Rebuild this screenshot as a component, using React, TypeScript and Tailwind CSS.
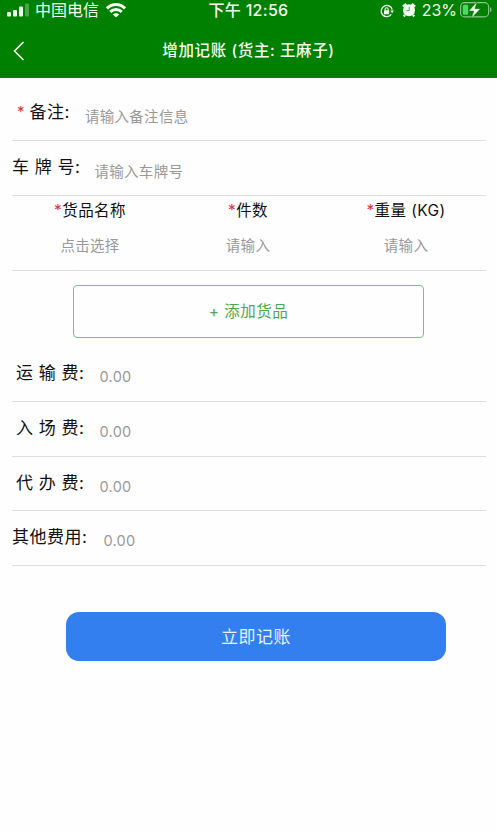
import clsx from "clsx";

const fees = [
  { label: "运 输 费:", pad: "pl-1", gap: "ml-[15px]" },
  { label: "入 场 费:", pad: "pl-1", gap: "ml-[15px]" },
  { label: "代 办 费:", pad: "pl-1", gap: "ml-[15px]" },
  { label: "其他费用:", pad: "", gap: "ml-[16px]" },
];

const columns = [
  { title: "货品名称", hint: "点击选择" },
  { title: "件数", hint: "请输入" },
  { title: "重量 (KG)", hint: "请输入" },
];

function StatusBar() {
  return (
    <div className="grid h-[21px] grid-cols-[1fr_auto_1fr] items-center text-[16px] leading-[21px]">
      <div className="flex items-center pl-[7px]">
        <svg className="-mt-px" width="22" height="14" viewBox="0 0 22 14" fill="#f2fff0">
          <rect x="0" y="9" width="4" height="4.5" rx="1" />
          <rect x="6" y="7" width="4" height="6.5" rx="1" />
          <rect x="12" y="3.5" width="4" height="10" rx="1" />
          <rect x="18" y="0.5" width="4" height="13" rx="1" opacity="0.3" />
        </svg>
        <span className="ml-[6px]">中国电信</span>
        <svg className="ml-[7px] -mt-px" width="20" height="15" viewBox="0 0 20 15" fill="none" stroke="#f2fff0" strokeWidth="2.9">
          <path d="M1 5.4C6 .2 14 .2 19 5.4" />
          <path d="M4.2 8.9c3.3-3.2 8.3-3.2 11.6 0" />
          <path d="M10 14.6 6.8 11.5c1.8-1.6 4.6-1.6 6.4 0z" fill="#f2fff0" stroke="none" />
        </svg>
      </div>
      <span className="text-[16px] font-medium tracking-[0.3px]">下午 12:56</span>
      <div className="flex items-center justify-end pr-[5px]">
        <svg width="14" height="14" viewBox="0 0 14 14" fill="none" stroke="#f2fff0" strokeWidth="1.3">
          <path d="M11.3 10.4A5.6 5.6 0 1 1 12.2 5.6" />
          <path d="M10.2 6.4H14l-1.9 2.8z" fill="#f2fff0" stroke="none" />
          <rect x="4" y="6.2" width="5.2" height="4" rx="0.5" fill="#f2fff0" stroke="none" />
          <path d="M5.1 6.5V5.2a1.5 1.5 0 0 1 3 0v1.3" strokeWidth="1.1" />
        </svg>
        <svg className="-mt-[2px] ml-[8px]" width="14" height="14" viewBox="0 0 14 14" fill="#f2fff0">
          <circle cx="7" cy="7.2" r="6" />
          <path d="M.9 3.7 4.2.9M13.1 3.7 9.8.9M3 12l-1.2 1.5M11 12l1.2 1.5" stroke="#f2fff0" strokeWidth="2.4" />
          <path d="M7.2 3.8v3.8H4.5" fill="none" stroke="#4da64a" strokeWidth="1" />
        </svg>
        <span className="ml-[6px]">23%</span>
        <svg className="ml-[3px] -mt-[2px]" width="32" height="18" viewBox="0 0 32 18">
          <rect x="0.6" y="1.6" width="28" height="14.3" rx="4" fill="none" stroke="#8dc58c" strokeWidth="1.1" />
          <rect x="2.8" y="3.8" width="5.4" height="9.9" rx="1.5" fill="#4fd36b" />
          <path d="M30 6.3c2 .7 2 4.2 0 4.9z" fill="#8dc58c" />
          <path d="M17.2.6 8.8 10h5l-2.5 7.3 9.2-9.6h-5.6z" fill="#fff" stroke="#008000" strokeWidth="0.5" />
        </svg>
      </div>
    </div>
  );
}

function Label({ children }: { children: React.ReactNode }) {
  return <span className="whitespace-pre text-[17px] leading-[25px] tracking-[0.5px] text-[#111]">{children}</span>;
}

function Hint({ children, className }: { children: React.ReactNode; className?: string }) {
  return (
    <span className={clsx("text-[14.5px] leading-6 tracking-[0.3px] text-[#999]", className)}>{children}</span>
  );
}

export default function App() {
  return (
    <div className="h-[833px] w-[497px] overflow-hidden bg-[#fefefe] font-['Inter','Noto_Sans_CJK_SC',sans-serif]">
      <header className="h-[78px] bg-[#008000] text-[#f2fff0]">
        <StatusBar />
        <div className="grid h-[59px] grid-cols-[1fr_auto_1fr] items-center">
          <svg className="ml-[13px]" width="12" height="20" viewBox="0 0 12 20" fill="none" stroke="#f2fff0" strokeWidth="1.6">
            <path d="M10.5 1 1.5 10l9 9" />
          </svg>
          <h1 className="text-[15.5px] font-medium tracking-[0.6px]">增加记账 (货主: 王麻子)</h1>
        </div>
      </header>

      <main className="pl-3 pr-[11px]">
        <div className="flex h-[63px] border-b border-[#dedede] pt-[22px]">
          <span className="ml-[5px] mr-[5px] text-[15px] leading-6 text-[#d33]">*</span>
          <Label>备注:</Label>
          <Hint className="ml-[15px] mt-[5px]">请输入备注信息</Hint>
        </div>
        <div className="flex h-[55px] border-b border-[#dedede] pt-[14px]">
          <Label>车 牌 号:</Label>
          <Hint className="ml-[14px] mt-[5px]">请输入车牌号</Hint>
        </div>

        <div className="grid h-[75px] grid-cols-3 border-b border-[#dedede] pt-[3px] text-center">
          {columns.map((c) => (
            <div key={c.title} className="-ml-[2px]">
              <p className="text-[15.5px] leading-6 tracking-[0.4px] text-[#111]">
                <span className="text-[#d33]">*</span>
                {c.title}
              </p>
              <p className="mt-[11px] text-[14.5px] leading-6 tracking-[0.3px] text-[#999]">{c.hint}</p>
            </div>
          ))}
        </div>

        <button className="ml-[61px] mt-[14px] block h-[53px] w-[351px] rounded-[4px] border border-[#7fbd84] text-[15.5px] tracking-[0.5px] text-[#4ca750]">
          + 添加货品
        </button>

        <div className="mt-[9px]">
          {fees.map((f) => (
            <div key={f.label} className={clsx("flex h-[54.75px] border-b border-[#dedede] pt-[14px]", f.pad)}>
              <Label>{f.label}</Label>
              <Hint className={clsx("mt-1", f.gap)}>0.00</Hint>
            </div>
          ))}
        </div>

        <button className="ml-[54px] mt-[46px] block h-[49px] w-[380px] rounded-[13px] bg-[#337ff0] pt-[2px] text-[17px] tracking-[0.5px] text-[#e6f4ff]">
          立即记账
        </button>
      </main>
    </div>
  );
}
